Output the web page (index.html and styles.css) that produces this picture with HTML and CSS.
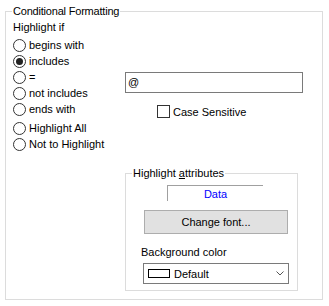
FILE: index.html
```html
<!DOCTYPE html>
<html lang="en">

<head>
  <title>Conditional Formatting</title>
  <link rel="stylesheet" href="styles.css">
</head>

<body>
  <fieldset class="group">
    <legend>Conditional Formatting</legend>
    <div class="caption">Highlight if</div>

    <div class="options">
      <div class="choices">
        <label class="radio"><span class="dot"></span>begins with</label>
        <label class="radio"><span class="dot on"></span>includes</label>
        <label class="radio"><span class="dot"></span>=</label>
        <label class="radio"><span class="dot"></span>not includes</label>
        <label class="radio"><span class="dot"></span>ends with</label>

        <div class="extra">
          <label class="radio"><span class="dot"></span>Highlight All</label>
          <label class="radio"><span class="dot"></span>Not to Highlight</label>
        </div>
      </div>

      <div class="match">
        <div class="textbox">@</div>
        <label class="check"><span class="box"></span>Case Sensitive</label>
      </div>
    </div>

    <fieldset class="attrs">
      <legend>Highlight <u>a</u>ttributes</legend>
      <div class="tab">Data</div>
      <div class="btn">Change font...</div>
      <div class="field-label">Background color</div>
      <div class="select">
        <span class="swatch"></span>
        <span class="select-text">Default</span>
        <svg class="chevron" width="8" height="5" viewBox="0 0 8 5">
          <polyline points="0.5,0.5 4,4 7.5,0.5" fill="none" stroke="#555" stroke-width="1" />
        </svg>
      </div>
    </fieldset>
  </fieldset>
</body>

</html>
```

FILE: styles.css
```css
body {
  margin: 0;
  padding: 4px 0 0 5px;
  font-family: 'Liberation Sans', Arial, sans-serif;
  font-size: 11px;
  color: #000;
  background-color: #fff;
}

legend {
  padding: 0 1px;
  line-height: 14px;
}

/* outer group box */
.group {
  margin: 0;
  width: 318px;
  min-width: 0;
  box-sizing: border-box;
  border: 1px solid #dcdcdc;
  padding: 2px 7px 8px 7px;
}

.group > legend {
  margin-left: -1px;
  letter-spacing: -0.2px;
}

.caption {
  line-height: 14px;
}

.options {
  display: flex;
  margin-top: 3px;
}

.choices {
  width: 112px;
}

.radio {
  display: flex;
  align-items: center;
  gap: 3px;
  height: 16px;
  white-space: nowrap;
}

.dot {
  display: flex;
  align-items: center;
  justify-content: center;
  width: 13px;
  height: 13px;
  box-sizing: border-box;
  border: 1px solid #333;
  border-radius: 50%;
  background-color: #fff;
}

.dot.on::after {
  content: '';
  width: 7px;
  height: 7px;
  border-radius: 50%;
  background-color: #222;
}

.extra {
  margin-top: 3px;
}

.match {
  padding-top: 35px;
}

.textbox {
  width: 178px;
  height: 21px;
  box-sizing: border-box;
  border: 1px solid #7a7a7a;
  padding-left: 2px;
  line-height: 19px;
}

.check {
  display: flex;
  align-items: center;
  gap: 3px;
  height: 13px;
  margin: 12px 0 0 32px;
}

.box {
  width: 13px;
  height: 13px;
  box-sizing: border-box;
  border: 1px solid #333;
  background-color: #fff;
}

/* inner group box */
.attrs {
  margin: 14px 0 0 112px;
  width: 173px;
  min-width: 0;
  box-sizing: border-box;
  border: 1px solid #dcdcdc;
  padding: 0 8px 6px 6px;
}

.tab {
  margin: 5px 0 0 35px;
  width: 96px;
  height: 16px;
  box-sizing: border-box;
  border-top: 1px solid #a0a0a0;
  border-left: 1px solid #a0a0a0;
  color: #0000ff;
  text-align: center;
  line-height: 16px;
}

.btn {
  margin: 9px 0 0 12px;
  width: 144px;
  height: 24px;
  box-sizing: border-box;
  background-color: #e1e1e1;
  border: 1px solid #adadad;
  text-align: center;
  line-height: 22px;
}

.field-label {
  margin: 11px 0 0 9px;
  line-height: 14px;
}

.select {
  display: flex;
  align-items: center;
  margin: 4px 0 0 11px;
  width: 146px;
  height: 21px;
  box-sizing: border-box;
  border: 1px solid #7a7a7a;
}

.swatch {
  width: 22px;
  height: 9px;
  box-sizing: border-box;
  border: 1px solid #000;
  margin-left: 4px;
}

.select-text {
  flex: 1;
  margin-left: 4px;
}

.chevron {
  margin-right: 4px;
}
```
